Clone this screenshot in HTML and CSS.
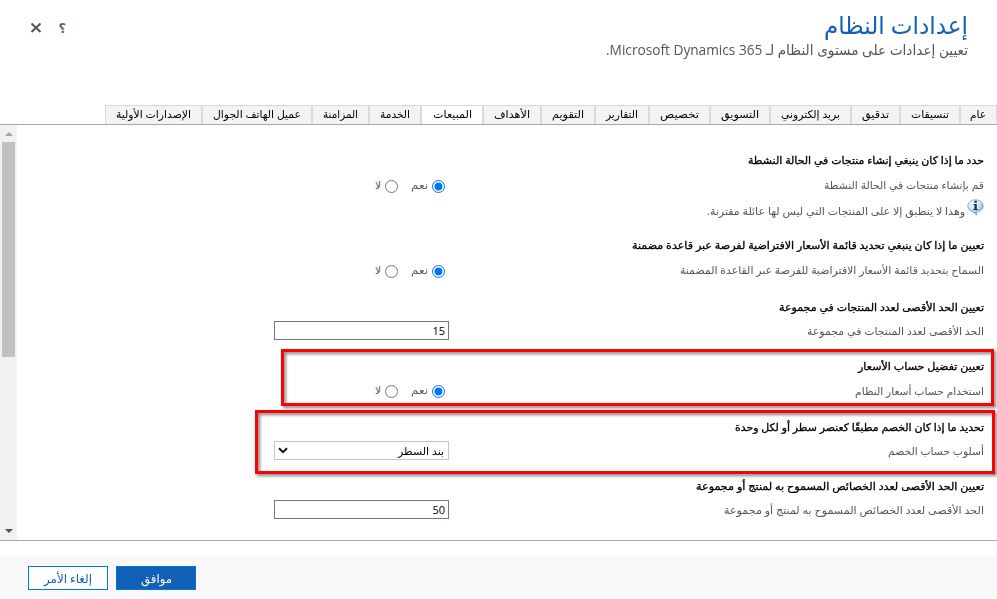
FILE: index.html
```html
<!DOCTYPE html>
<html lang="ar" dir="rtl">
<head>
<meta charset="utf-8">
<title>إعدادات النظام</title>
<link rel="stylesheet" href="styles.css">
</head>
<body>
<header class="header">
  <div class="titles">
    <h1><span data-w="144">إعدادات النظام</span></h1>
    <p><span data-w="362">تعيين إعدادات على مستوى النظام لـ Microsoft Dynamics 365.</span></p>
  </div>
  <div class="tools">
    <span class="help">؟</span>
    <svg class="close" width="12" height="12" viewBox="0 0 12 12"><path d="M1.500 1.500 10.500 10M10.500 1.500 1.500 10"/></svg>
  </div>
</header>
<nav class="tabs">
  <div class="tab t1"><span data-w="16">عام</span></div>
  <div class="tab t2"><span data-w="38">تنسيقات</span></div>
  <div class="tab t3"><span data-w="27">تدقيق</span></div>
  <div class="tab t4"><span data-w="59">بريد إلكتروني</span></div>
  <div class="tab t5"><span data-w="38">التسويق</span></div>
  <div class="tab t6"><span data-w="39">تخصيص</span></div>
  <div class="tab t7"><span data-w="32">التقارير</span></div>
  <div class="tab t8"><span data-w="32">التقويم</span></div>
  <div class="tab t9"><span data-w="36">الأهداف</span></div>
  <div class="tab t10 active"><span data-w="39">المبيعات</span></div>
  <div class="tab t11"><span data-w="30">الخدمة</span></div>
  <div class="tab t12"><span data-w="35">المزامنة</span></div>
  <div class="tab t13"><span data-w="88">عميل الهاتف الجوال</span></div>
  <div class="tab t14"><span data-w="75">الإصدارات الأولية</span></div>
</nav>
<main class="panel">
  <div class="content">
    <section class="s1">
      <h2><span data-w="236">حدد ما إذا كان ينبغي إنشاء منتجات في الحالة النشطة</span></h2>
      <div class="row"><label><span data-w="160">قم بإنشاء منتجات في الحالة النشطة</span></label>
        <div class="radios"><i class="radio on"></i><span class="yes" data-w="17">نعم</span><i class="radio"></i><span class="no" data-w="6">لا</span></div></div>
      <div class="note">
        <svg width="17" height="17" viewBox="0 0 17 17"><defs><radialGradient id="g" cx=".4" cy=".25" r=".8"><stop offset="0" stop-color="#fff"/><stop offset=".5" stop-color="#cfe0f5"/><stop offset="1" stop-color="#4f88cc"/></radialGradient></defs><path d="M8.500.8C4 .8.8 3.500.8 7c0 3 2.300 5.200 5.200 5.900L9.500 16v-3c4-.4 6.700-2.700 6.700-6C16.200 3.500 13 .8 8.500.8Z" fill="url(#g)" stroke="#7d9fc6" stroke-width=".8"/><path d="M7.300 1.800h2.500v2H7.300zM6.500 5h3.300v5h1v1H6.300v-1h1.100V6h-.9z" fill="#0b3270"/></svg>
        <span data-w="258">وهذا لا ينطبق إلا على المنتجات التي ليس لها عائلة مقترنة.</span></div>
    </section>
    <section class="s2">
      <h2><span data-w="352">تعيين ما إذا كان ينبغي تحديد قائمة الأسعار الافتراضية لفرصة عبر قاعدة مضمنة</span></h2>
      <div class="row"><label><span data-w="304">السماح بتحديد قائمة الأسعار الافتراضية للفرصة عبر القاعدة المضمنة</span></label>
        <div class="radios"><i class="radio on"></i><span class="yes" data-w="17">نعم</span><i class="radio"></i><span class="no" data-w="6">لا</span></div></div>
    </section>
    <section class="s3">
      <h2><span data-w="205">تعيين الحد الأقصى لعدد المنتجات في مجموعة</span></h2>
      <div class="row tight"><label><span data-w="177">الحد الأقصى لعدد المنتجات في مجموعة</span></label><div class="input">15</div></div>
    </section>
    <section class="s4">
      <h2><span data-w="126">تعيين تفضيل حساب الأسعار</span></h2>
      <div class="row tight"><label><span data-w="129">استخدام حساب أسعار النظام</span></label>
        <div class="radios"><i class="radio on"></i><span class="yes" data-w="17">نعم</span><i class="radio"></i><span class="no" data-w="6">لا</span></div></div>
    </section>
    <section class="s5">
      <h2><span data-w="249">تحديد ما إذا كان الخصم مطبقًا كعنصر سطر أو لكل وحدة</span></h2>
      <div class="row tight"><label><span data-w="96">أسلوب حساب الخصم</span></label>
        <div class="input select"><span data-w="46">بند السطر</span><svg width="10" height="7" viewBox="0 0 10 7"><path d="M1 1.200 5 5.200 9 1.200"/></svg></div></div>
    </section>
    <section class="s6">
      <h2><span data-w="288">تعيين الحد الأقصى لعدد الخصائص المسموح به لمنتج أو مجموعة</span></h2>
      <div class="row tight"><label><span data-w="260">الحد الأقصى لعدد الخصائص المسموح به لمنتج أو مجموعة</span></label><div class="input">50</div></div>
    </section>
  </div>
  <div class="scrollbar"><i class="up"></i><i class="thumb"></i><i class="down"></i></div>
</main>
<footer class="footer">
  <div class="btn ok"><span data-w="31">موافق</span></div>
  <div class="btn cancel"><span data-w="48">إلغاء الأمر</span></div>
</footer>
<div class="mark m1"></div>
<div class="mark m2"></div>
<script src="fit.js"></script>
</body>
</html>
```
FILE: styles.css
```css
* { box-sizing: border-box; }
html, body { margin: 0; height: 100%; overflow: hidden; }
body {
  display: flex; flex-direction: column;
  background: #fff; color: #000;
  font: 10.500px "Open Sans", "DejaVu Sans", sans-serif;
}
span { white-space: nowrap; }
.header { height: 105px; display: flex; justify-content: space-between; padding: 0 29px 0 30px; }
.titles { padding-top: 8px; }
h1 { margin: 0; height: 32px; line-height: 34px; font-size: 24px; font-weight: 400; color: #1160b7; }
.titles p { margin: 0; height: 20px; line-height: 20px; font-size: 14px; color: #555; }
.tools { display: flex; gap: 15px; padding-top: 20px; height: 36px; align-items: center; }
.help { font-size: 13px; line-height: 14px; font-weight: 700; color: #666; width: 9px; }
.close path { fill: none; stroke: #555; stroke-width: 2; }
.tabs { display: flex; height: 19px; }
.tab {
  border: 1px solid #dadada; border-bottom: 0; background: #f3f3f3;
  display: flex; justify-content: center; line-height: 17px;
}
.tab.active { background: #fff; }
.t1 { width: 37px; padding-right: 1px; } .t2 { width: 60px; } .t3 { width: 49px; } .t4 { width: 81px; }
.t5 { width: 60px; } .t6 { width: 61px; } .t7 { width: 54px; } .t8 { width: 54px; }
.t9 { width: 58px; } .t10 { width: 62px; } .t11 { width: 52px; } .t12 { width: 57px; }
.t13 { width: 110px; } .t14 { width: 97px; }
.panel { height: 417px; border: solid #a3a7b5; border-width: 1px 0; display: flex; justify-content: space-between; }
.content { flex: 1; padding: 25px 13px 0 0; }
.s1 { height: 85px; } .s2 { height: 62px; } .s3 { height: 59px; }
.s4 { height: 61px; } .s5 { height: 59px; }
h2 { margin: 0; height: 20px; line-height: 21px; font-size: 10.500px; font-weight: 400; -webkit-text-stroke: .3px #000; }
.row { display: flex; height: 30px; line-height: 30px; color: #555; }
.row.tight { margin-top: -1px; }
.s4 .row { line-height: 32px; }
.row label { width: 535px; }
.radios { display: flex; align-items: center; height: 30px; line-height: 30px; padding: 3px 4px 0 0; }
.radio { width: 13px; height: 13px; border: 1px solid #767676; border-radius: 50%; }
.radio.on { border-color: #0075ff; background: radial-gradient(circle, #0075ff 3.700px, #fff 4.300px); }
.yes { width: 17px; margin: -4px 4px 0 13px; }
.no { width: 7px; margin: -4px 4px 0 0; }
.input { width: 175px; height: 19px; margin-top: 5px; border: 1px solid #767676; padding: 0 3px; line-height: 18px; font-size: 11px; color: #000; background: #fff; }
.select { display: flex; justify-content: space-between; align-items: center; border-color: #c6c6c6; padding: 0 4px 0 3px; line-height: 16px; font-size: 10.500px; }
.select svg path { fill: none; stroke: #111; stroke-width: 2; }
.note { display: flex; gap: 2px; height: 22px; line-height: 24px; color: #555; margin-top: -1px; }
.note svg { margin-top: 0; }
.scrollbar { width: 17px; background: #f1f1f1; display: flex; flex-direction: column; align-items: center; }
.up { border: 4px solid transparent; border-top: 0; border-bottom-color: #a3a3a3; margin: 7px 0 6px; }
.thumb { width: 13px; height: 215px; background: #c1c1c1; }
.down { border: 4px solid transparent; border-bottom: 0; border-top-color: #505050; margin-top: auto; margin-bottom: 7px; }
.footer { margin-top: 15px; height: 43px; background: #f8f8f8; display: flex; justify-content: flex-end; gap: 8px; padding: 10px 0 0 28px; }
.btn { width: 80px; height: 24px; border: 1px solid #0078d7; display: flex; justify-content: center; line-height: 23px; font-size: 12px; }
.ok { background: #1160b7; color: #fff; }
.cancel { background: #fff; color: #1160b7; }
.mark { position: absolute; border: 3px solid #f00; filter: drop-shadow(2px 2px 1.500px rgba(0,0,0,.5)); }
.m1 { left: 281px; top: 349px; width: 713px; height: 57px; }
.m2 { left: 255px; top: 410px; width: 740px; height: 64px; }
```
FILE: fit.js
```js
// Scales each label horizontally to the width it is laid out for.
document.querySelectorAll('[data-w]').forEach(function (el) {
  var want = +el.dataset.w;
  el.style.display = 'inline-block';
  el.style.width = 'max-content';
  var have = el.getBoundingClientRect().width;
  var centered = el.parentNode.matches('.tab, .btn');
  el.style.width = want + 'px';
  el.style.transformOrigin = 'right center';
  if (centered) el.style.flex = 'none';
  el.style.transform = 'scaleX(' + want / have + ')';
});
```
